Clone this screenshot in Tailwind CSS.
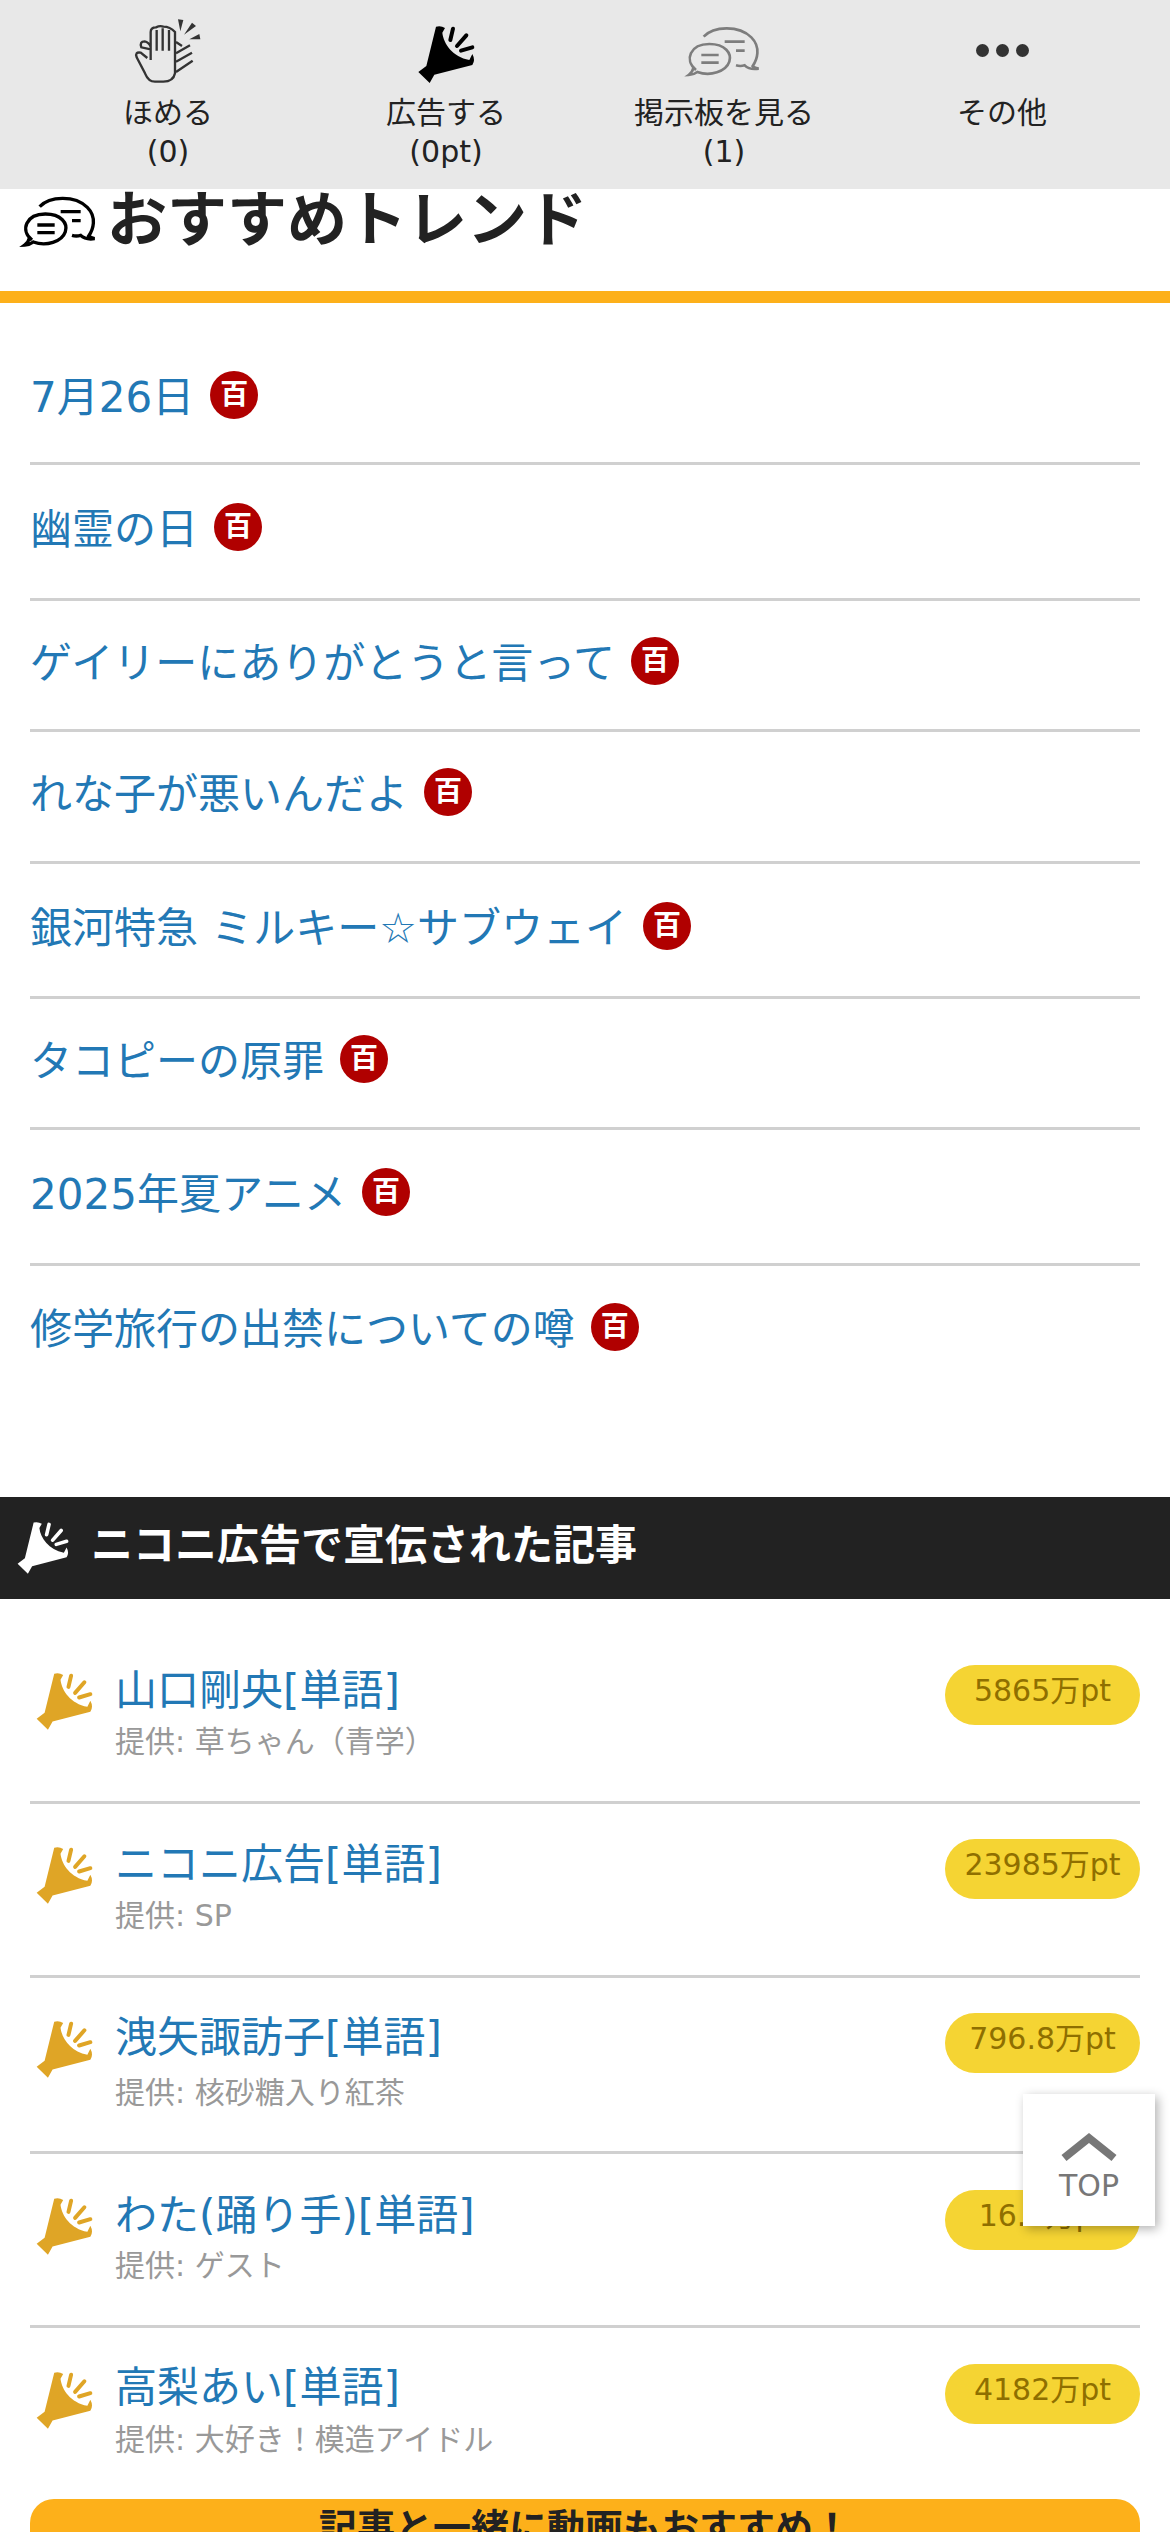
<!DOCTYPE html>
<html lang="ja">
<head>
  <meta charset="UTF-8">
  <title>おすすめトレンド</title>
  <script src="https://cdn.jsdelivr.net/npm/@tailwindcss/browser@4"></script>
</head>
<body class="bg-white text-[#222] font-['DejaVu_Sans','Noto_Sans_CJK_JP',sans-serif]">
  <svg class="hidden" width="0" height="0">
    <defs>
      <g id="mega">
        <path fill="currentColor" d="M105 50 Q120 46 132 54 L124 68 C128 102 155 140 205 150 L214 132 Q224 150 214 165 L100 194 L86 219 L52 186 L76 168 Z"/>
        <path fill="none" stroke="currentColor" stroke-width="12" stroke-linecap="round" d="M156 56 L148 90 M196 76 L168 108 M214 112 L180 122"/>
      </g>
      <g id="chat" fill="none" stroke="currentColor">
        <path d="M72 180 C35 150 55 102 112 102 C160 102 180 130 172 155 C162 185 115 200 76 186 Q66 194 50 195 Q62 186 64 174"/>
        <path d="M95 80 C125 48 200 45 238 82 C268 112 255 150 242 168 Q248 174 260 176 Q232 180 218 166 Q205 170 192 166"/>
        <path d="M88 135 H140 M88 158 H140"/>
        <path d="M158 95 H218 M192 122 H218"/>
      </g>
    </defs>
  </svg>

  <div class="relative h-[2532px] overflow-hidden">
    <!-- top action bar sits over the scrolled heading -->
    <div class="absolute top-0 left-0 right-0 z-10 h-[189px] bg-[#e8e8e8] px-[29px] pt-[10px] grid grid-cols-4 text-[30px] leading-[39px] text-center">
      <div>
        <svg class="w-[120px] h-[80px] mx-auto" viewBox="-6 0 360 240" fill="none" stroke="#333">
          <path stroke-width="7" d="M122 150 V66 Q122 52 138 52 Q150 46 160 50 Q180 50 195 66 V190 Q190 215 160 215 H135 Q115 215 105 190 L80 142 Q74 125 92 128 L112 144 M122 118 L94 112 Q88 94 104 94 Q116 96 122 110"/>
          <path stroke-width="7" d="M140 60 V122 M158 55 V122 M177 60 V122 M198 96 L216 108 M198 130 L240 106 M198 155 L246 128 M198 186 L248 152"/>
          <path fill="#333" stroke="none" d="M204 28 L220 30 L211 64 Z M246 38 L258 48 L222 74 Z M268 72 L271 88 L238 88 Z"/>
        </svg>
        <div class="mt-[3px]">ほめる<br>(0)</div>
      </div>
      <div>
        <svg class="w-[120px] h-[80px] mx-auto text-black" viewBox="-45 0 360 240"><use href="#mega"/></svg>
        <div class="mt-[3px]">広告する<br>(0pt)</div>
      </div>
      <div>
        <svg class="w-[120px] h-[80px] mx-auto text-[#7d7d7d]" viewBox="-24 0 360 240"><use href="#chat" stroke-width="8"/></svg>
        <div class="mt-[3px]">掲示板を見る<br>(1)</div>
      </div>
      <div>
        <div class="h-[80px] flex items-center justify-center gap-[7px]">
          <span class="w-[13px] h-[13px] rounded-full bg-[#333]"></span>
          <span class="w-[13px] h-[13px] rounded-full bg-[#333]"></span>
          <span class="w-[13px] h-[13px] rounded-full bg-[#333]"></span>
        </div>
        <div class="mt-[3px]">その他</div>
      </div>
    </div>

    <!-- heading -->
    <div class="pt-[180px] pl-[8px] h-[291px] flex items-start">
      <svg class="w-[100px] h-[80px] text-black" viewBox="0 0 300 240"><use href="#chat" stroke-width="10"/></svg>
      <h2 class="-ml-[1px] h-[80px] flex items-center text-[60px] font-bold">おすすめトレンド</h2>
    </div>
    <div class="h-[12px] bg-[#fdb01a]"></div>

    <!-- trend list -->
    <ul class="mt-[26px] mx-[30px] text-[42px] text-[#2278b5]">
      <li class="h-[136px] pt-[3px] border-b-[3px] border-[#d0d0d0] flex items-center gap-[16px]"><span>7月26日</span><span class="w-[48px] h-[48px] mb-[5px] rounded-full bg-[#b00000] text-white text-[28px] font-bold flex items-center justify-center">百</span></li>
      <li class="h-[136px] pb-[4px] border-b-[3px] border-[#d0d0d0] flex items-center gap-[16px]"><span>幽霊の日</span><span class="w-[48px] h-[48px] mb-[5px] rounded-full bg-[#b00000] text-white text-[28px] font-bold flex items-center justify-center">百</span></li>
      <li class="h-[131px] pb-[4px] border-b-[3px] border-[#d0d0d0] flex items-center gap-[16px]"><span>ゲイリーにありがとうと言って</span><span class="w-[48px] h-[48px] mb-[5px] rounded-full bg-[#b00000] text-white text-[28px] font-bold flex items-center justify-center">百</span></li>
      <li class="h-[132px] pb-[4px] border-b-[3px] border-[#d0d0d0] flex items-center gap-[16px]"><span>れな子が悪いんだよ</span><span class="w-[48px] h-[48px] mb-[5px] rounded-full bg-[#b00000] text-white text-[28px] font-bold flex items-center justify-center">百</span></li>
      <li class="h-[135px] pb-[4px] border-b-[3px] border-[#d0d0d0] flex items-center gap-[16px]"><span>銀河特急 ミルキー☆サブウェイ</span><span class="w-[48px] h-[48px] mb-[5px] rounded-full bg-[#b00000] text-white text-[28px] font-bold flex items-center justify-center">百</span></li>
      <li class="h-[131px] pb-[4px] border-b-[3px] border-[#d0d0d0] flex items-center gap-[16px]"><span>タコピーの原罪</span><span class="w-[48px] h-[48px] mb-[5px] rounded-full bg-[#b00000] text-white text-[28px] font-bold flex items-center justify-center">百</span></li>
      <li class="h-[136px] pb-[4px] border-b-[3px] border-[#d0d0d0] flex items-center gap-[16px]"><span>2025年夏アニメ</span><span class="w-[48px] h-[48px] mb-[5px] rounded-full bg-[#b00000] text-white text-[28px] font-bold flex items-center justify-center">百</span></li>
      <li class="h-[131px] pb-[4px] flex items-center gap-[16px]"><span>修学旅行の出禁についての噂</span><span class="w-[48px] h-[48px] mb-[5px] rounded-full bg-[#b00000] text-white text-[28px] font-bold flex items-center justify-center">百</span></li>
    </ul>

    <!-- ad section -->
    <div class="mt-[100px] h-[102px] bg-[#222] text-white flex items-center pl-[17px]">
      <svg class="w-[52px] h-[52px]" viewBox="50 48 172 172"><use href="#mega"/></svg>
      <h2 class="ml-[22px] pb-[6px] text-[42px] font-bold">ニコニ広告で宣伝された記事</h2>
    </div>

    <ul class="mt-[31px] mx-[30px]">
      <li class="h-[174px] border-b-[3px] border-[#d0d0d0] pt-[35px] flex items-start">
        <svg class="w-[57px] h-[57px] ml-[6px] mt-[8px] text-[#dfa526]" viewBox="50 48 172 172"><use href="#mega"/></svg>
        <div class="ml-[22px] mt-[3px] flex-1">
          <div class="text-[42px] leading-[46px] text-[#2278b5]">山口剛央[単語]</div>
          <div class="mt-[10px] text-[30px] leading-[36px] text-[#999]">提供: 草ちゃん（青学）</div>
        </div>
        <span class="w-[195px] h-[60px] rounded-full bg-[#f5d433] text-[#8f6f00] text-[30px] leading-[52px] text-center">5865万pt</span>
      </li>
      <li class="h-[174px] border-b-[3px] border-[#d0d0d0] pt-[35px] flex items-start">
        <svg class="w-[57px] h-[57px] ml-[6px] mt-[8px] text-[#dfa526]" viewBox="50 48 172 172"><use href="#mega"/></svg>
        <div class="ml-[22px] mt-[3px] flex-1">
          <div class="text-[42px] leading-[46px] text-[#2278b5]">ニコニ広告[単語]</div>
          <div class="mt-[10px] text-[30px] leading-[36px] text-[#999]">提供: SP</div>
        </div>
        <span class="w-[195px] h-[60px] rounded-full bg-[#f5d433] text-[#8f6f00] text-[30px] leading-[52px] text-center">23985万pt</span>
      </li>
      <li class="h-[176px] border-b-[3px] border-[#d0d0d0] pt-[35px] flex items-start">
        <svg class="w-[57px] h-[57px] ml-[6px] mt-[8px] text-[#dfa526]" viewBox="50 48 172 172"><use href="#mega"/></svg>
        <div class="ml-[22px] mt-[2px] flex-1">
          <div class="text-[42px] leading-[46px] text-[#2278b5]">洩矢諏訪子[単語]</div>
          <div class="mt-[14px] text-[30px] leading-[36px] text-[#999]">提供: 核砂糖入り紅茶</div>
        </div>
        <span class="w-[195px] h-[60px] rounded-full bg-[#f5d433] text-[#8f6f00] text-[30px] leading-[52px] text-center">796.8万pt</span>
      </li>
      <li class="h-[174px] border-b-[3px] border-[#d0d0d0] pt-[36px] flex items-start">
        <svg class="w-[57px] h-[57px] ml-[6px] mt-[8px] text-[#dfa526]" viewBox="50 48 172 172"><use href="#mega"/></svg>
        <div class="ml-[22px] mt-[3px] flex-1">
          <div class="text-[42px] leading-[46px] text-[#2278b5]">わた(踊り手)[単語]</div>
          <div class="mt-[9px] text-[30px] leading-[36px] text-[#999]">提供: ゲスト</div>
        </div>
        <span class="w-[195px] h-[60px] rounded-full bg-[#f5d433] text-[#8f6f00] text-[30px] leading-[52px] text-center">16.7万pt</span>
      </li>
      <li class="h-[171px] pt-[36px] flex items-start">
        <svg class="w-[57px] h-[57px] ml-[6px] mt-[8px] text-[#dfa526]" viewBox="50 48 172 172"><use href="#mega"/></svg>
        <div class="ml-[22px] mt-[1px] flex-1">
          <div class="text-[42px] leading-[46px] text-[#2278b5]">高梨あい[単語]</div>
          <div class="mt-[11px] text-[30px] leading-[36px] text-[#999]">提供: 大好き！模造アイドル</div>
        </div>
        <span class="w-[195px] h-[60px] rounded-full bg-[#f5d433] text-[#8f6f00] text-[30px] leading-[52px] text-center">4182万pt</span>
      </li>
    </ul>

    <div class="mx-[30px] h-[60px] rounded-t-[24px] bg-[#fdb01a] text-[38px] font-bold text-center leading-[58px]">記事と一緒に動画もおすすめ！</div>

    <!-- back to top -->
    <div class="absolute left-[1023px] top-[2094px] w-[132px] h-[132px] bg-white shadow-[3px_3px_10px_rgba(0,0,0,0.3)] flex flex-col items-center pt-[38px] text-[#777]">
      <svg class="w-[56px] h-[30px]" viewBox="0 0 56 30" fill="none" stroke="currentColor" stroke-width="8"><path d="M3 26 L28 6 L53 26"/></svg>
      <span class="text-[30px] leading-[34px] mt-[7px]">TOP</span>
    </div>
  </div>
</body>
</html>
